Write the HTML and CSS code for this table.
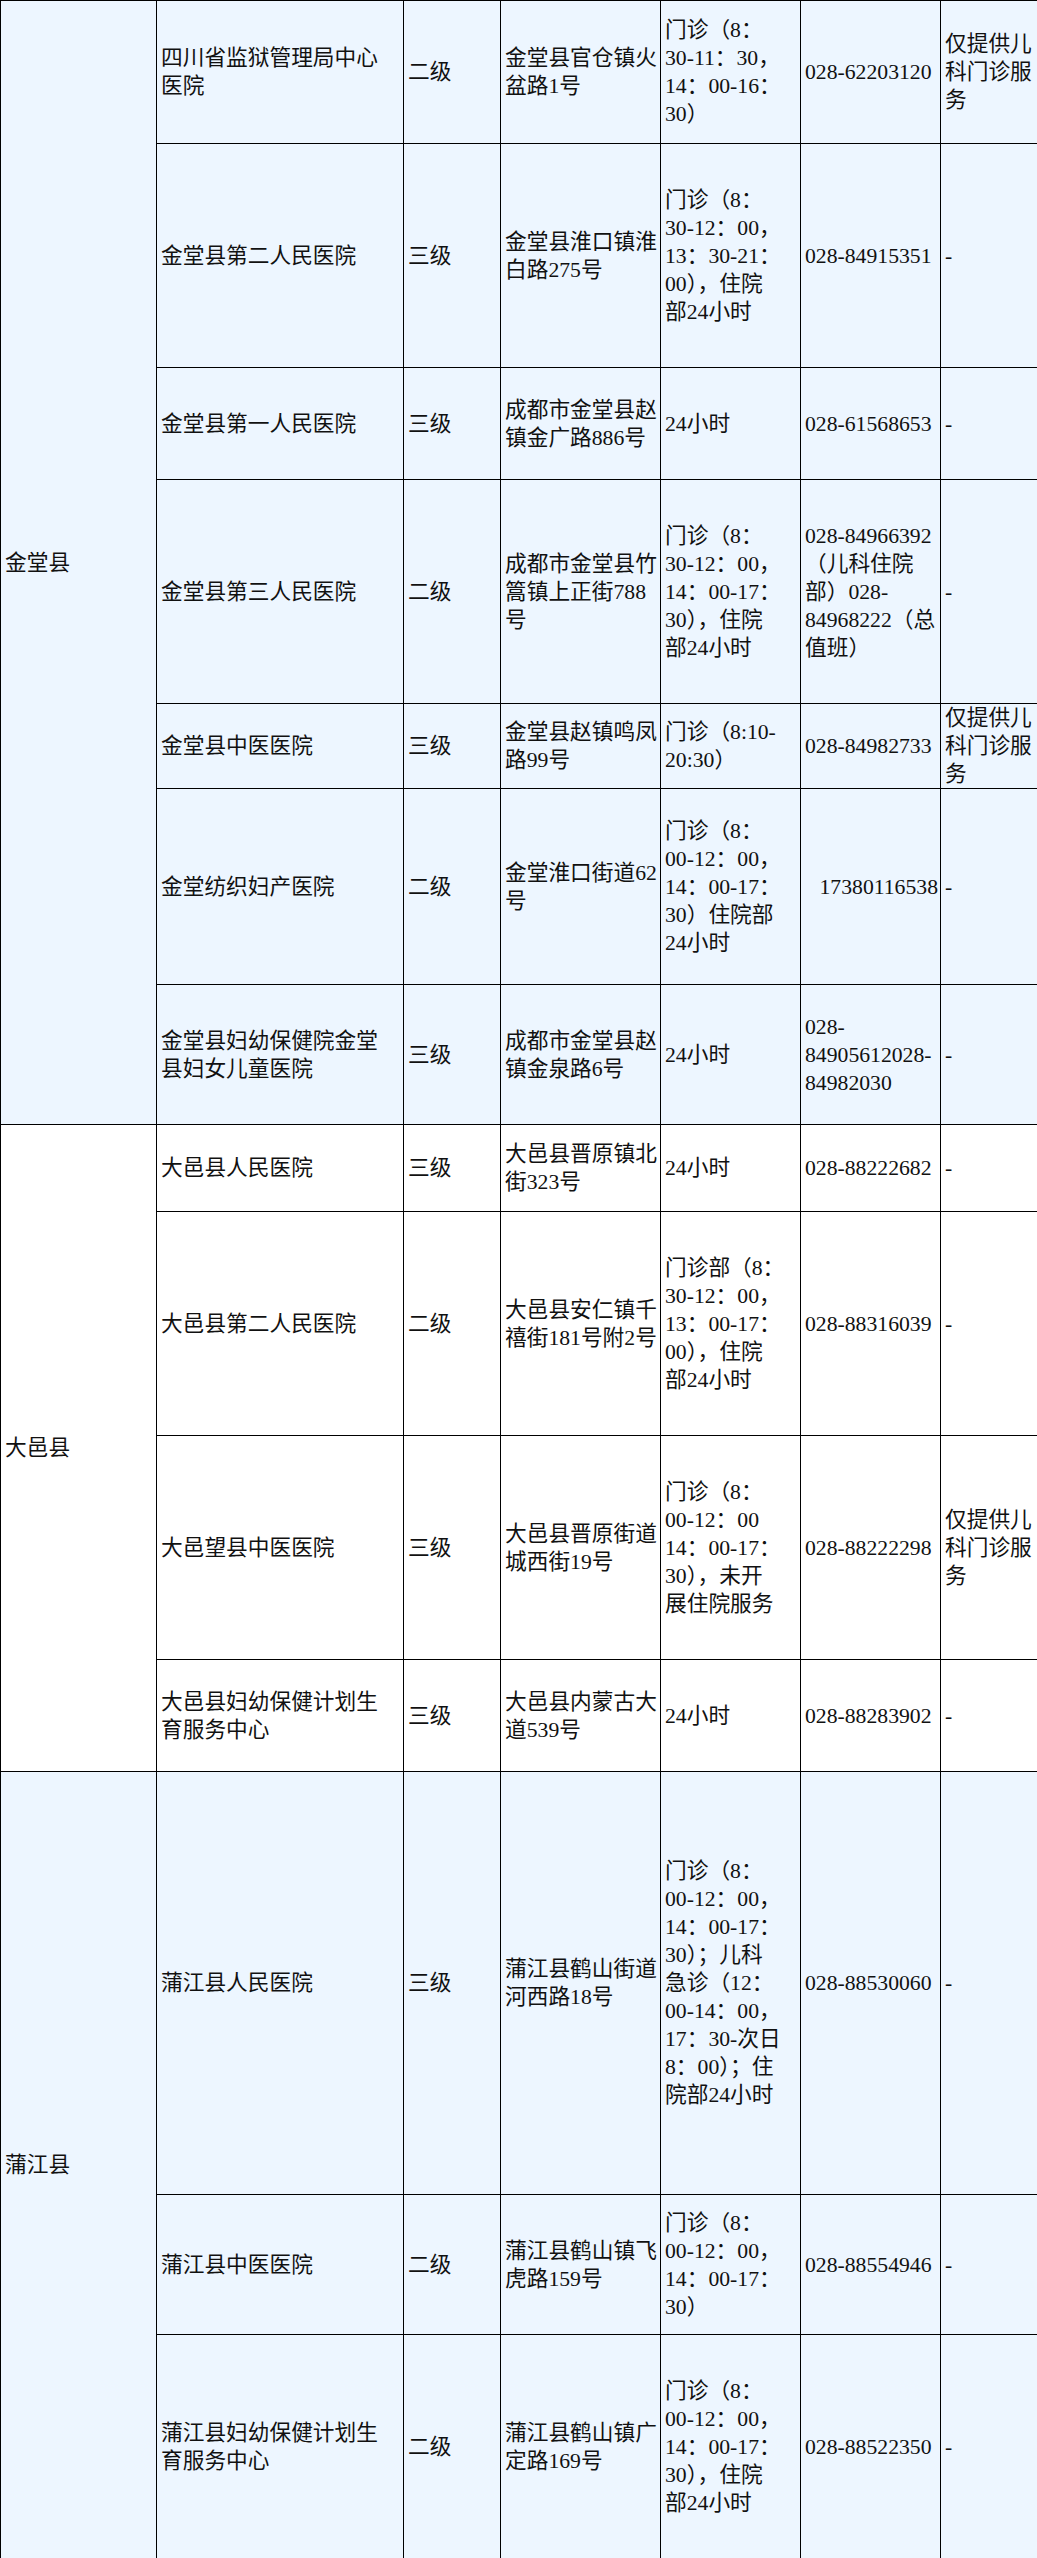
FILE: index.html
```html
<!DOCTYPE html>
<html lang="zh-CN">
<head>
<meta charset="utf-8">
<title>医院列表</title>
<link rel="stylesheet" href="styles.css">
</head>
<body>
<table class="hosp">
  <colgroup>
    <col class="c-county">
    <col class="c-name">
    <col class="c-level">
    <col class="c-addr">
    <col class="c-hours">
    <col class="c-phone">
    <col class="c-note">
  </colgroup>
  <tbody class="sec-blue">
    <tr class="h143">
      <td rowspan="7">金堂县</td>
      <td>四川省监狱管理局中心<br>医院</td>
      <td>二级</td>
      <td>金堂县官仓镇火<br>盆路1号</td>
      <td>门诊（8：<br>30-11：30，<br>14：00-16：<br>30）</td>
      <td>028-62203120</td>
      <td>仅提供儿<br>科门诊服<br>务</td>
    </tr>
    <tr class="h224">
      <td>金堂县第二人民医院</td>
      <td>三级</td>
      <td>金堂县淮口镇淮<br>白路275号</td>
      <td>门诊（8：<br>30-12：00，<br>13：30-21：<br>00），住院<br>部24小时</td>
      <td>028-84915351</td>
      <td>-</td>
    </tr>
    <tr class="h112">
      <td>金堂县第一人民医院</td>
      <td>三级</td>
      <td>成都市金堂县赵<br>镇金广路886号</td>
      <td>24小时</td>
      <td>028-61568653</td>
      <td>-</td>
    </tr>
    <tr class="h224">
      <td>金堂县第三人民医院</td>
      <td>二级</td>
      <td>成都市金堂县竹<br>篙镇上正街788<br>号</td>
      <td>门诊（8：<br>30-12：00，<br>14：00-17：<br>30），住院<br>部24小时</td>
      <td>028-84966392<br>（儿科住院<br>部）028-<br>84968222（总<br>值班）</td>
      <td>-</td>
    </tr>
    <tr class="h84">
      <td>金堂县中医医院</td>
      <td>三级</td>
      <td>金堂县赵镇鸣凤<br>路99号</td>
      <td>门诊（8:10-<br>20:30）</td>
      <td>028-84982733</td>
      <td>仅提供儿<br>科门诊服<br>务</td>
    </tr>
    <tr class="h196">
      <td>金堂纺织妇产医院</td>
      <td>二级</td>
      <td>金堂淮口街道62<br>号</td>
      <td>门诊（8：<br>00-12：00，<br>14：00-17：<br>30）住院部<br>24小时</td>
      <td class="num-right">17380116538</td>
      <td>-</td>
    </tr>
    <tr class="h140">
      <td>金堂县妇幼保健院金堂<br>县妇女儿童医院</td>
      <td>三级</td>
      <td>成都市金堂县赵<br>镇金泉路6号</td>
      <td>24小时</td>
      <td>028-<br>84905612028-<br>84982030</td>
      <td>-</td>
    </tr>
  </tbody>
  <tbody class="sec-white">
    <tr class="h87">
      <td rowspan="4">大邑县</td>
      <td>大邑县人民医院</td>
      <td>三级</td>
      <td>大邑县晋原镇北<br>街323号</td>
      <td>24小时</td>
      <td>028-88222682</td>
      <td>-</td>
    </tr>
    <tr class="h224">
      <td>大邑县第二人民医院</td>
      <td>二级</td>
      <td>大邑县安仁镇千<br>禧街181号附2号</td>
      <td>门诊部（8：<br>30-12：00，<br>13：00-17：<br>00），住院<br>部24小时</td>
      <td>028-88316039</td>
      <td>-</td>
    </tr>
    <tr class="h224">
      <td>大邑望县中医医院</td>
      <td>三级</td>
      <td>大邑县晋原街道<br>城西街19号</td>
      <td>门诊（8：<br>00-12：00<br>14：00-17：<br>30），未开<br>展住院服务</td>
      <td>028-88222298</td>
      <td>仅提供儿<br>科门诊服<br>务</td>
    </tr>
    <tr class="h112">
      <td>大邑县妇幼保健计划生<br>育服务中心</td>
      <td>三级</td>
      <td>大邑县内蒙古大<br>道539号</td>
      <td>24小时</td>
      <td>028-88283902</td>
      <td>-</td>
    </tr>
  </tbody>
  <tbody class="sec-blue">
    <tr class="h423">
      <td rowspan="3">蒲江县</td>
      <td>蒲江县人民医院</td>
      <td>三级</td>
      <td>蒲江县鹤山街道<br>河西路18号</td>
      <td>门诊（8：<br>00-12：00，<br>14：00-17：<br>30）；儿科<br>急诊（12：<br>00-14：00，<br>17：30-次日<br>8：00）；住<br>院部24小时</td>
      <td>028-88530060</td>
      <td>-</td>
    </tr>
    <tr class="h140">
      <td>蒲江县中医医院</td>
      <td>二级</td>
      <td>蒲江县鹤山镇飞<br>虎路159号</td>
      <td>门诊（8：<br>00-12：00，<br>14：00-17：<br>30）</td>
      <td>028-88554946</td>
      <td>-</td>
    </tr>
    <tr class="h224">
      <td>蒲江县妇幼保健计划生<br>育服务中心</td>
      <td>二级</td>
      <td>蒲江县鹤山镇广<br>定路169号</td>
      <td>门诊（8：<br>00-12：00，<br>14：00-17：<br>30），住院<br>部24小时</td>
      <td>028-88522350</td>
      <td>-</td>
    </tr>
  </tbody>
</table>
</body>
</html>
```

FILE: styles.css
```css
html, body {
  margin: 0;
  padding: 0;
  background: #ffffff;
}

.hosp {
  width: 1037px;
  table-layout: fixed;
  border-collapse: collapse;
  font-family: "Liberation Serif", "Noto Sans CJK SC", serif;
  font-size: 21.7px;
  line-height: 28px;
  color: #111111;
}

.c-county { width: 156px; }
.c-name { width: 247px; }
.c-level { width: 97px; }
.c-addr { width: 160px; }
.c-hours { width: 140px; }
.c-phone { width: 140px; }
.c-note { width: 97px; }

.hosp td {
  border: 1px solid #000000;
  padding: 0 2px 0 4px;
  vertical-align: middle;
  text-align: left;
  white-space: nowrap;
  overflow: visible;
}

.sec-blue td { background: #edf6ff; }
.sec-white td { background: #ffffff; }

.hosp td.num-right { text-align: right; }

.h84 { height: 84px; }
.h87 { height: 87px; }
.h112 { height: 112px; }
.h140 { height: 140px; }
.h143 { height: 143px; }
.h196 { height: 196px; }
.h224 { height: 224px; }
.h423 { height: 423px; }
```
